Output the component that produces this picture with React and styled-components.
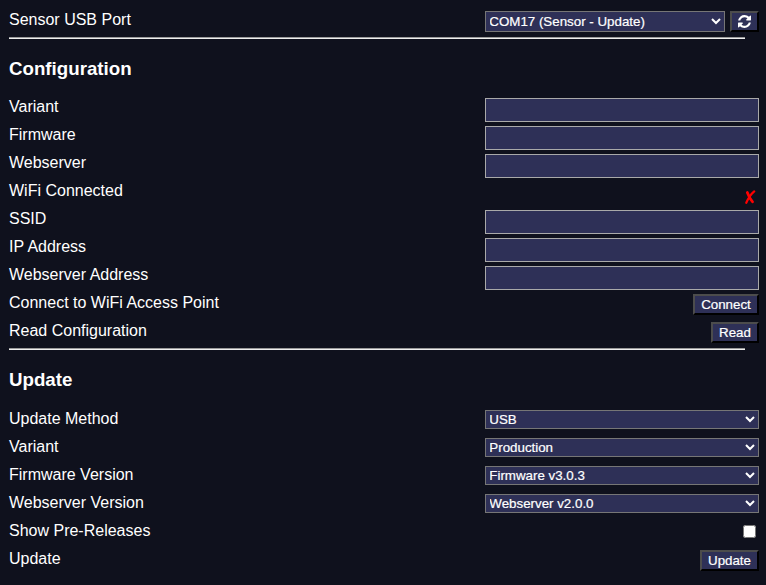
import React from "react";
import styled, { createGlobalStyle } from "styled-components";

const GlobalStyle = createGlobalStyle`
  body { margin: 0; background: #0f111d; }
  * { box-sizing: border-box; }
`;

const Page = styled.main`
  height: 585px;
  padding: 10px 7px 0 9px;
  overflow: hidden;
  background: #0f111d;
  color: #fff;
  font: 16px/18px Arial, "Liberation Sans", sans-serif;
`;

const Row = styled.div`
  display: flex;
  justify-content: space-between;
  align-items: flex-start;
  height: ${(p) => p.$height || 28}px;
`;

const Label = styled.label`
  padding-top: 1px;
  white-space: nowrap;
`;

const Controls = styled.div`
  display: flex;
  justify-content: flex-end;
  gap: 5px;
  width: 274px;
  padding-top: 1px;
`;

const Divider = styled.hr`
  width: 736px;
  height: 2px;
  margin: 0;
  border: 0;
  border-top: 1px solid #9a9a9a;
  background: #eee;
`;

const Heading = styled.h3`
  margin: 19px 0 18px;
  font-size: 18.72px;
  line-height: 21px;
  font-weight: 700;
  height: ${(p) => p.$height || 21}px;
`;

const TextField = styled.input`
  width: 100%;
  height: 24px;
  margin: 0;
  padding: 1px 2px;
  border: 1px solid #a9a9a9;
  border-radius: 0;
  background: #2e3057;
  color: #fff;
`;

const Select = styled.select`
  flex: 1;
  min-width: 0;
  height: ${(p) => p.$height || 19}px;
  margin: 0;
  padding: 0;
  border: 1px solid #767676;
  border-radius: 0;
  background-color: #2e3057;
  color: #fff;
  font: 13.333px Arial, "Liberation Sans", sans-serif;
  text-indent: -0.7px;
  -webkit-text-stroke: 0.2px #fff;
`;

const Button = styled.button`
  display: flex;
  align-items: center;
  justify-content: center;
  width: ${(p) => p.$width}px;
  height: 21px;
  margin: 0;
  padding: 0;
  border: 2px solid;
  border-color: #4c4c4c #000 #000 #4c4c4c;
  border-radius: 0;
  background: #2e3057;
  color: #fff;
  font: 13.333px Arial, "Liberation Sans", sans-serif;
  -webkit-text-stroke: 0.2px #fff;
`;

const Checkbox = styled.input`
  width: 13px;
  height: 13px;
  margin: 3px 3px 0 0;
`;

const StatusIcon = styled.svg`
  width: 12px;
  height: 15px;
  margin: 7px 3px 0 0;
  fill: none;
  stroke: #f00;
  stroke-linecap: round;
`;

function RefreshIcon() {
  return (
    <svg width="13" height="13" viewBox="0 0 1536 1536" fill="currentColor" aria-hidden="true">
      <path d="M1511 928q0 5-1 7-64 268-268 434.500T764 1536q-146 0-282.500-55T238 1324l-129 129q-19 19-45 19t-45-19-19-45V960q0-26 19-45t45-19h448q26 0 45 19t19 45-19 45l-137 137q71 66 161 102t187 36q134 0 250-65t186-179q11-17 53-117 8-23 30-23h192q13 0 22.500 9.500t9.500 22.500zm25-800v448q0 26-19 45t-45 19h-448q-26 0-45-19t-19-45 19-45l138-138Q969 256 768 256q-134 0-250 65T332 500q-11 17-53 117-8 23-30 23H50q-13 0-22.500-9.500T18 608v-7q65-268 270-434.500T768 0q146 0 284 55.500T1297 212l130-129q19-19 45-19t45 19 19 45z" />
    </svg>
  );
}

function Field({ label, height, children }) {
  return (
    <Row $height={height}>
      <Label>{label}</Label>
      <Controls>{children}</Controls>
    </Row>
  );
}

function Choice({ value, height }) {
  return (
    <Select $height={height} defaultValue={value}>
      <option>{value}</option>
    </Select>
  );
}

export default function App() {
  return (
    <>
      <GlobalStyle />
      <Page>
        <Field label="Sensor USB Port" height={27}>
          <Choice value="COM17 (Sensor - Update)" height={21} />
          <Button $width={29} aria-label="Refresh ports"><RefreshIcon /></Button>
        </Field>
        <Divider />
        <Heading $height={21}>Configuration</Heading>
        <Field label="Variant"><TextField /></Field>
        <Field label="Firmware"><TextField /></Field>
        <Field label="Webserver"><TextField /></Field>
        <Field label="WiFi Connected">
          <StatusIcon viewBox="0 0 12 15" aria-label="Not connected">
            <path d="M3.300 3.500C4.200 6 5.500 9.500 8.600 12.800" strokeWidth="2.700" />
            <path d="M10.200 2.400C7 5 4.200 9.500 2.300 13.800" strokeWidth="2.200" />
          </StatusIcon>
        </Field>
        <Field label="SSID"><TextField /></Field>
        <Field label="IP Address"><TextField /></Field>
        <Field label="Webserver Address"><TextField /></Field>
        <Field label="Connect to WiFi Access Point"><Button $width={66}>Connect</Button></Field>
        <Field label="Read Configuration" height={27}><Button $width={48}>Read</Button></Field>
        <Divider />
        <Heading $height={22}>Update</Heading>
        <Field label="Update Method"><Choice value="USB" /></Field>
        <Field label="Variant"><Choice value="Production" /></Field>
        <Field label="Firmware Version"><Choice value="Firmware v3.0.3" /></Field>
        <Field label="Webserver Version"><Choice value="Webserver v2.0.0" /></Field>
        <Field label="Show Pre-Releases"><Checkbox type="checkbox" /></Field>
        <Field label="Update"><Button $width={59}>Update</Button></Field>
      </Page>
    </>
  );
}
